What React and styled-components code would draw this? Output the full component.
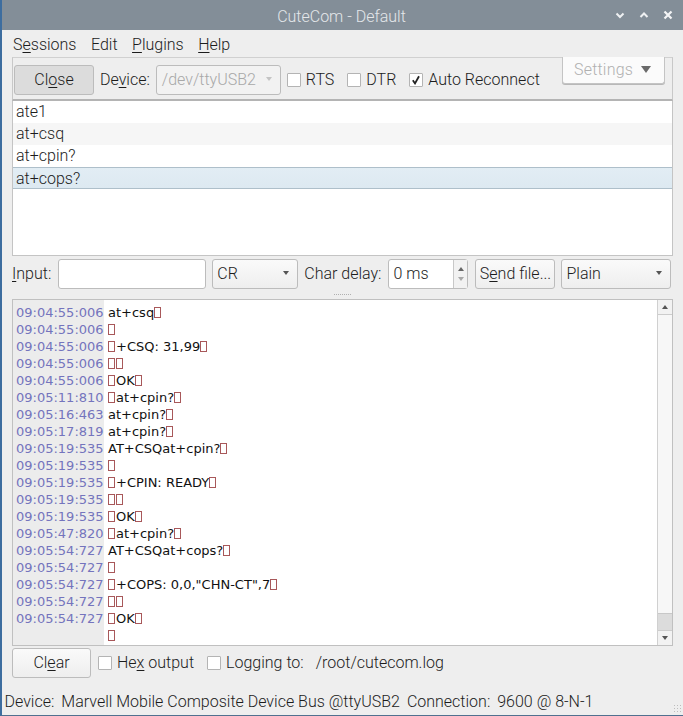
import React from 'react';
import styled, { createGlobalStyle } from 'styled-components';

const GlobalStyle = createGlobalStyle`
  html, body { margin: 0; padding: 0; background: #eeeeee; }
  body { font-family: Roboto, "Liberation Sans", sans-serif; font-weight: 300; color: #1c1c1c; }
  u { text-decoration-thickness: 1px; text-underline-offset: 2px; }
`;

const Window = styled.div`
  width: 683px;
  height: 716px;
  box-sizing: border-box;
  display: flex;
  flex-direction: column;
  background: #eeeeee;
  border-left: 2px solid #3d6d9f;
  border-bottom: 1px solid #50708f;
  overflow: hidden;
  font-size: 16px;
  position: relative;
`;

const TitleBar = styled.div`
  height: 30px;
  flex: none;
  box-sizing: border-box;
  padding: 2px 2px 0 0;
  display: flex;
  align-items: center;
  justify-content: center;
  background: #838e98;
  color: #e4e7ea;
  font-size: 16px;
  position: relative;
`;

const WindowButtons = styled.div`
  position: absolute;
  right: 10px;
  top: 10px;
  display: flex;
  gap: 14px;
  svg { display: block; }
`;

const MenuBar = styled.div`
  height: 26px;
  flex: none;
  display: flex;
  align-items: center;
  gap: 14.5px;
  padding-left: 11px;
  margin-top: 1px;
`;

const MenuItem = styled.span`
  font-size: 16px;
`;

const Content = styled.div`
  flex: 1;
  display: flex;
  flex-direction: column;
  margin: 0 10px 0 10px;
  min-height: 0;
`;

const Toolbar = styled.div`
  height: 44px;
  flex: none;
  box-sizing: border-box;
  display: flex;
  align-items: flex-start;
  border-top: 1px solid #d0d0d0;
  border-left: 1px solid #c8c8c8;
  border-right: 1px solid #c8c8c8;
  border-bottom: 2px solid #b4b4b4;
  padding: 7px 0 0 1px;
`;

const Button = styled.div`
  box-sizing: border-box;
  width: ${p => p.$width}px;
  height: 30px;
  margin-left: ${p => p.$left || 0}px;
  padding-bottom: 1px;
  display: flex;
  align-items: center;
  justify-content: center;
  flex: none;
  border: 1px solid #bcbcbc;
  border-radius: 3px;
  background: ${p => (p.$pressed ? '#dcdcdc' : 'linear-gradient(#fafafa, #eeeeee)')};
  font-size: 16px;
`;

const Field = styled.span`
  font-size: 16px;
  line-height: 30px;
  flex: none;
  margin-left: ${p => p.$left || 0}px;
  white-space: pre;
`;

const Combo = styled.div`
  box-sizing: border-box;
  width: ${p => p.$width}px;
  height: 30px;
  flex: none;
  margin-left: ${p => p.$left || 0}px;
  display: flex;
  align-items: center;
  justify-content: space-between;
  padding: 0 8px 2px ${p => p.$pad || 4}px;
  border: 1px solid #bcbcbc;
  border-radius: 3px;
  background: ${p => (p.$disabled ? '#f2f2f2' : 'linear-gradient(#fafafa, #eeeeee)')};
  color: ${p => (p.$disabled ? '#a8a8a8' : 'inherit')};
  font-size: 16px;
`;

const Caret = styled.i`
  width: 0;
  height: 0;
  border-left: ${p => p.$size || 3.5}px solid transparent;
  border-right: ${p => p.$size || 3.5}px solid transparent;
  ${p => (p.$up ? 'border-bottom' : 'border-top')}: ${p => (p.$size ? p.$size + 2 : 4)}px solid ${p => p.$color || '#555555'};
`;

const CheckBox = styled.span`
  box-sizing: border-box;
  width: 14px;
  height: 14px;
  flex: none;
  margin: 8px 5px 0 ${p => p.$left || 0}px;
  background: #ffffff;
  border: 1px solid #b4b4b4;
  border-radius: 1px;
  display: flex;
  align-items: center;
  justify-content: center;
`;

const SettingsButton = styled.div`
  box-sizing: border-box;
  position: absolute;
  left: 560px;
  top: 57px;
  width: 103px;
  height: 27px;
  padding: 0 0 2px 11px;
  border: 1px solid #c4c4c4;
  border-top: none;
  border-radius: 0 0 3px 3px;
  background: #fbfbfb;
  color: #b0b0b0;
  font-size: 16px;
  letter-spacing: 0.2px;
  display: flex;
  align-items: center;
  gap: 8px;
  box-shadow: 0 1px 0 #b8b8b8;
`;

const CommandList = styled.div`
  height: 155px;
  flex: none;
  box-sizing: border-box;
  background: #ffffff;
  border: 1px solid #c4c4c4;
  border-top: none;
`;

const CommandRow = styled.div`
  height: 22px;
  line-height: 22px;
  padding-left: 3px;
  font-size: 16px;
  background: ${p => (p.$alt ? '#f6f6f6' : '#ffffff')};
  ${p => p.$selected && `
    background: linear-gradient(#e2edf4, #dde9f1);
    border-top: 1px solid #aebfca;
    border-bottom: 1px solid #aebfca;
    height: 22px;
    line-height: 21px;
    box-sizing: border-box;
  `}
`;

const InputRow = styled.div`
  height: 30px;
  flex: none;
  margin-top: 3px;
  display: flex;
  align-items: flex-start;
`;

const TextInput = styled.div`
  box-sizing: border-box;
  width: 148px;
  height: 30px;
  flex: none;
  margin-left: 7px;
  background: #ffffff;
  border: 1px solid #bcbcbc;
  border-radius: 3px;
`;

const Spin = styled.div`
  box-sizing: border-box;
  width: 80px;
  height: 30px;
  flex: none;
  margin-left: 7px;
  display: flex;
  background: #ffffff;
  border: 1px solid #bcbcbc;
  border-radius: 3px;
  font-size: 16px;
  line-height: 28px;
`;

const SpinText = styled.span`
  flex: 1;
  padding-left: 4px;
`;

const SpinArrows = styled.span`
  width: 14px;
  background: #f2f2f2;
  border-left: 1px solid #c8c8c8;
  display: flex;
  flex-direction: column;
  align-items: center;
  justify-content: space-around;
  padding: 4px 0;
  box-sizing: border-box;
`;

const Splitter = styled.div`
  height: 10px;
  flex: none;
  display: flex;
  justify-content: center;
  align-items: center;
  gap: 1px;
  & > i { width: 1px; height: 1px; background: #b0b0b0; }
`;

const LogFrame = styled.div`
  height: 347px;
  flex: none;
  box-sizing: border-box;
  display: flex;
  background: #ffffff;
  border: 1px solid #c0c0c0;
  overflow: hidden;
`;

const LogBody = styled.div`
  flex: 1;
  min-width: 0;
  display: grid;
  grid-template-columns: 91px 1fr;
  grid-auto-rows: 17px;
  padding: 4px 0 0 0;
  font-family: "DejaVu Sans", sans-serif;
  font-weight: 400;
  font-size: 13px;
  line-height: 17px;
  background: linear-gradient(90deg, #ececec 91px, #ffffff 91px);
`;

const Stamp = styled.span`
  color: #7474bd;
  padding-left: 3px;
  white-space: nowrap;
`;

const LogText = styled.span`
  color: #111111;
  padding-left: 4px;
  white-space: pre;
  display: flex;
  align-items: center;
`;

const Tofu = styled.i`
  display: inline-block;
  box-sizing: border-box;
  width: 7px;
  height: 11px;
  margin-right: 1px;
  border: 1px solid #a8585a;
  flex: none;
`;

const ScrollBar = styled.div`
  width: 14px;
  flex: none;
  display: flex;
  flex-direction: column;
  background: #f7f7f7;
  border-left: 1px solid #d0d0d0;
`;

const ScrollEnd = styled.div`
  height: 14px;
  flex: none;
  display: flex;
  align-items: center;
  justify-content: center;
  background: #f2f2f2;
  ${p => (p.$bottom ? 'border-top: 1px solid #cccccc;' : 'border-bottom: 1px solid #cccccc;')}
`;

const ScrollTrack = styled.div`
  flex: 1;
  display: flex;
  flex-direction: column;
  justify-content: flex-end;
`;

const ScrollThumb = styled.div`
  height: 16px;
  background: #dcdcdc;
  border-top: 1px solid #c8c8c8;
`;

const BottomRow = styled.div`
  height: 30px;
  flex: none;
  margin-top: 2px;
  display: flex;
  align-items: flex-start;
`;

const StatusBar = styled.div`
  flex: none;
  margin: 0 0 2px 2.5px;
  display: flex;
  gap: 7px;
  height: 23px;
  align-items: center;
  font-size: 16px;
  white-space: pre;
`;

const SizeGrip = styled.div`
  position: absolute;
  right: 2px;
  bottom: 3px;
  width: 8px;
  height: 8px;
  background-image: radial-gradient(#bdbdbd 0.6px, transparent 0.8px);
  background-size: 3px 3px;
`;

const LOG = [
  ['09:04:55:006', 'at+csq#'],
  ['09:04:55:006', '#'],
  ['09:04:55:006', '#+CSQ: 31,99#'],
  ['09:04:55:006', '##'],
  ['09:04:55:006', '#OK#'],
  ['09:05:11:810', '#at+cpin?#'],
  ['09:05:16:463', 'at+cpin?#'],
  ['09:05:17:819', 'at+cpin?#'],
  ['09:05:19:535', 'AT+CSQat+cpin?#'],
  ['09:05:19:535', '#'],
  ['09:05:19:535', '#+CPIN: READY#'],
  ['09:05:19:535', '##'],
  ['09:05:19:535', '#OK#'],
  ['09:05:47:820', '#at+cpin?#'],
  ['09:05:54:727', 'AT+CSQat+cops?#'],
  ['09:05:54:727', '#'],
  ['09:05:54:727', '#+COPS: 0,0,"CHN-CT",7#'],
  ['09:05:54:727', '##'],
  ['09:05:54:727', '#OK#'],
  ['', '#'],
];

// '#' marks the control characters that the log shows as missing-glyph boxes
const renderLog = text =>
  text.split(/(#)/).filter(Boolean).map((part, i) => (part === '#' ? <Tofu key={i} /> : <span key={i}>{part}</span>));

const App = () => (
  <Window>
    <GlobalStyle />
    <TitleBar>
      CuteCom - Default
      <WindowButtons>
        <svg width="10" height="10" viewBox="0 0 10 10" fill="none" stroke="#eef0f2" strokeWidth="2"><path d="M1.5 3.5 5 7l3.5-3.5" /></svg>
        <svg width="10" height="10" viewBox="0 0 10 10" fill="none" stroke="#eef0f2" strokeWidth="2"><path d="M1.5 7 5 3.5 8.5 7" /></svg>
        <svg width="10" height="10" viewBox="0 0 10 10" fill="none" stroke="#f4f5f6" strokeWidth="2.2"><path d="M1.5 1.5l7 7M8.5 1.5l-7 7" /></svg>
      </WindowButtons>
    </TitleBar>
    <MenuBar>
      <MenuItem>S<u>e</u>ssions</MenuItem>
      <MenuItem>Edit</MenuItem>
      <MenuItem><u>P</u>lugins</MenuItem>
      <MenuItem><u>H</u>elp</MenuItem>
    </MenuBar>
    <Content>
      <Toolbar>
        <Button $width={80} $pressed>Cl<u>o</u>se</Button>
        <Field $left={6}>De<u>v</u>ice:</Field>
        <Combo $width={125} $left={6} $pad={5} $disabled>/dev/ttyUSB2<Caret $color="#c4c4c4" /></Combo>
        <CheckBox $left={6} />
        <Field>RTS</Field>
        <CheckBox $left={13} />
        <Field>DTR</Field>
        <CheckBox $left={13}>
          <svg width="10" height="10" viewBox="0 0 10 10" fill="none" stroke="#222222" strokeWidth="1.8"><path d="M1.8 5.2 4 8.4 8 1.2" /></svg>
        </CheckBox>
        <Field>Auto Reconnect</Field>
      </Toolbar>
      <SettingsButton>Settings<Caret $size={5} $color="#6a6a6a" /></SettingsButton>
      <CommandList>
        <CommandRow>ate1</CommandRow>
        <CommandRow $alt>at+csq</CommandRow>
        <CommandRow>at+cpin?</CommandRow>
        <CommandRow $selected>at+cops?</CommandRow>
      </CommandList>
      <InputRow>
        <Field><u>I</u>nput:</Field>
        <TextInput />
        <Combo $width={86} $left={6}>CR<Caret /></Combo>
        <Field $left={6}>Char delay:</Field>
        <Spin>
          <SpinText>0 ms</SpinText>
          <SpinArrows><Caret $up $color="#666666" /><Caret $color="#a8a8a8" /></SpinArrows>
        </Spin>
        <Button $width={80} $left={7}>S<u>e</u>nd file...</Button>
        <Combo $width={110} $left={6}>Plain<Caret /></Combo>
      </InputRow>
      <Splitter>{Array.from({ length: 9 }, (_, i) => <i key={i} />)}</Splitter>
      <LogFrame>
        <LogBody>
          {LOG.map(([stamp, text], i) => (
            <React.Fragment key={i}>
              <Stamp>{stamp}</Stamp>
              <LogText>{renderLog(text)}</LogText>
            </React.Fragment>
          ))}
        </LogBody>
        <ScrollBar>
          <ScrollEnd><Caret $up /></ScrollEnd>
          <ScrollTrack><ScrollThumb /></ScrollTrack>
          <ScrollEnd $bottom><Caret /></ScrollEnd>
        </ScrollBar>
      </LogFrame>
      <BottomRow>
        <Button $width={79}>Cl<u>e</u>ar</Button>
        <CheckBox $left={7} />
        <Field>He<u>x</u> output</Field>
        <CheckBox $left={13} />
        <Field>Logging to:</Field>
        <Field $left={12}>/root/cutecom.log</Field>
      </BottomRow>
    </Content>
    <StatusBar>
      <span>Device:</span>
      <span>Marvell Mobile Composite Device Bus @ttyUSB2</span>
      <span>Connection:</span>
      <span>9600 @ 8-N-1</span>
    </StatusBar>
    <SizeGrip />
  </Window>
);

export default App;
